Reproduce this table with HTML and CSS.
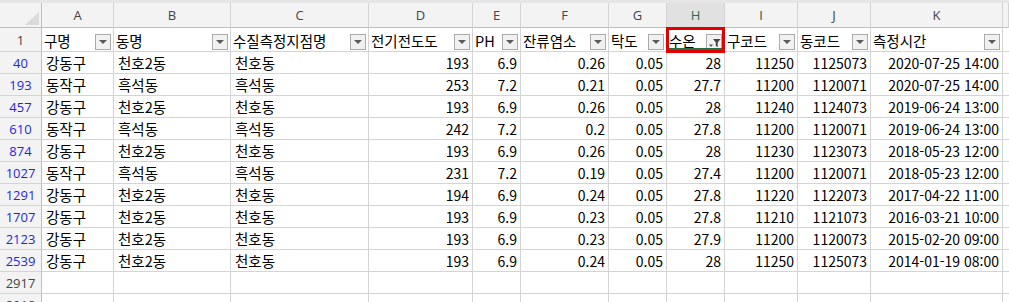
FILE: index.html
```html
<!DOCTYPE html>
<html lang="ko">
<head>
    <meta charset="UTF-8">
    <title>수질 측정 데이터</title>
    <link rel="stylesheet" href="styles.css">
</head>
<body>
    <div class="ribbon-edge"></div>

    <div class="sheet">
        <!-- 열 머리글 -->
        <div class="row">
            <div class="corner"><span class="corner-tri"></span></div>
            <div class="col-head">A</div>
            <div class="col-head">B</div>
            <div class="col-head">C</div>
            <div class="col-head">D</div>
            <div class="col-head">E</div>
            <div class="col-head">F</div>
            <div class="col-head">G</div>
            <div class="col-head selected">H</div>
            <div class="col-head">I</div>
            <div class="col-head">J</div>
            <div class="col-head">K</div>
            <div class="col-head"></div>
        </div>

        <!-- 필터 머리글 -->
        <div class="row">
            <div class="row-head plain">1</div>
            <div class="cell head">구명<span class="filter-btn"></span></div>
            <div class="cell head">동명<span class="filter-btn"></span></div>
            <div class="cell head">수질측정지점명<span class="filter-btn"></span></div>
            <div class="cell head">전기전도도<span class="filter-btn"></span></div>
            <div class="cell head">PH<span class="filter-btn"></span></div>
            <div class="cell head">잔류염소<span class="filter-btn"></span></div>
            <div class="cell head">탁도<span class="filter-btn"></span></div>
            <div class="cell head active">수온
                <span class="filter-btn filtered">
                    <svg viewBox="0 0 13 13" width="13" height="13">
                        <path d="M1 8.5h4l-2 2.5z" fill="#555"/>
                        <path d="M5 3h7.5l-2.8 3.4v4.6l-1.9-1.1v-3.5z" fill="#444"/>
                    </svg>
                </span>
                <span class="mark"></span>
            </div>
            <div class="cell head">구코드<span class="filter-btn"></span></div>
            <div class="cell head">동코드<span class="filter-btn"></span></div>
            <div class="cell head">측정시간<span class="filter-btn"></span></div>
            <div class="cell"></div>
        </div>

        <div class="row">
            <div class="row-head">40</div>
            <div class="cell">강동구</div><div class="cell">천호2동</div><div class="cell">천호동</div>
            <div class="cell num">193</div><div class="cell num">6.9</div><div class="cell num">0.26</div><div class="cell num">0.05</div><div class="cell num">28</div>
            <div class="cell num">11250</div><div class="cell num">1125073</div><div class="cell num">2020-07-25 14:00</div><div class="cell"></div>
        </div>
        <div class="row">
            <div class="row-head">193</div>
            <div class="cell">동작구</div><div class="cell">흑석동</div><div class="cell">흑석동</div>
            <div class="cell num">253</div><div class="cell num">7.2</div><div class="cell num">0.21</div><div class="cell num">0.05</div><div class="cell num">27.7</div>
            <div class="cell num">11200</div><div class="cell num">1120071</div><div class="cell num">2020-07-25 14:00</div><div class="cell"></div>
        </div>
        <div class="row">
            <div class="row-head">457</div>
            <div class="cell">강동구</div><div class="cell">천호2동</div><div class="cell">천호동</div>
            <div class="cell num">193</div><div class="cell num">6.9</div><div class="cell num">0.26</div><div class="cell num">0.05</div><div class="cell num">28</div>
            <div class="cell num">11240</div><div class="cell num">1124073</div><div class="cell num">2019-06-24 13:00</div><div class="cell"></div>
        </div>
        <div class="row">
            <div class="row-head">610</div>
            <div class="cell">동작구</div><div class="cell">흑석동</div><div class="cell">흑석동</div>
            <div class="cell num">242</div><div class="cell num">7.2</div><div class="cell num">0.2</div><div class="cell num">0.05</div><div class="cell num">27.8</div>
            <div class="cell num">11200</div><div class="cell num">1120071</div><div class="cell num">2019-06-24 13:00</div><div class="cell"></div>
        </div>
        <div class="row">
            <div class="row-head">874</div>
            <div class="cell">강동구</div><div class="cell">천호2동</div><div class="cell">천호동</div>
            <div class="cell num">193</div><div class="cell num">6.9</div><div class="cell num">0.26</div><div class="cell num">0.05</div><div class="cell num">28</div>
            <div class="cell num">11230</div><div class="cell num">1123073</div><div class="cell num">2018-05-23 12:00</div><div class="cell"></div>
        </div>
        <div class="row">
            <div class="row-head">1027</div>
            <div class="cell">동작구</div><div class="cell">흑석동</div><div class="cell">흑석동</div>
            <div class="cell num">231</div><div class="cell num">7.2</div><div class="cell num">0.19</div><div class="cell num">0.05</div><div class="cell num">27.4</div>
            <div class="cell num">11200</div><div class="cell num">1120071</div><div class="cell num">2018-05-23 12:00</div><div class="cell"></div>
        </div>
        <div class="row">
            <div class="row-head">1291</div>
            <div class="cell">강동구</div><div class="cell">천호2동</div><div class="cell">천호동</div>
            <div class="cell num">194</div><div class="cell num">6.9</div><div class="cell num">0.24</div><div class="cell num">0.05</div><div class="cell num">27.8</div>
            <div class="cell num">11220</div><div class="cell num">1122073</div><div class="cell num">2017-04-22 11:00</div><div class="cell"></div>
        </div>
        <div class="row">
            <div class="row-head">1707</div>
            <div class="cell">강동구</div><div class="cell">천호2동</div><div class="cell">천호동</div>
            <div class="cell num">193</div><div class="cell num">6.9</div><div class="cell num">0.23</div><div class="cell num">0.05</div><div class="cell num">27.8</div>
            <div class="cell num">11210</div><div class="cell num">1121073</div><div class="cell num">2016-03-21 10:00</div><div class="cell"></div>
        </div>
        <div class="row">
            <div class="row-head">2123</div>
            <div class="cell">강동구</div><div class="cell">천호2동</div><div class="cell">천호동</div>
            <div class="cell num">193</div><div class="cell num">6.9</div><div class="cell num">0.23</div><div class="cell num">0.05</div><div class="cell num">27.9</div>
            <div class="cell num">11200</div><div class="cell num">1120073</div><div class="cell num">2015-02-20 09:00</div><div class="cell"></div>
        </div>
        <div class="row">
            <div class="row-head">2539</div>
            <div class="cell">강동구</div><div class="cell">천호2동</div><div class="cell">천호동</div>
            <div class="cell num">193</div><div class="cell num">6.9</div><div class="cell num">0.24</div><div class="cell num">0.05</div><div class="cell num">28</div>
            <div class="cell num">11250</div><div class="cell num">1125073</div><div class="cell num">2014-01-19 08:00</div><div class="cell"></div>
        </div>
        <div class="row">
            <div class="row-head plain">2917</div>
            <div class="cell"></div><div class="cell"></div><div class="cell"></div><div class="cell"></div>
            <div class="cell"></div><div class="cell"></div><div class="cell"></div><div class="cell"></div>
            <div class="cell"></div><div class="cell"></div><div class="cell"></div><div class="cell"></div>
        </div>
        <div class="row">
            <div class="row-head plain">2918</div>
            <div class="cell"></div><div class="cell"></div><div class="cell"></div><div class="cell"></div>
            <div class="cell"></div><div class="cell"></div><div class="cell"></div><div class="cell"></div>
            <div class="cell"></div><div class="cell"></div><div class="cell"></div><div class="cell"></div>
        </div>
    </div>
</body>
</html>
```

FILE: styles.css
```css
:root {
    --grid-line: #d4d4d4;
    --head-bg: #f3f3f3;
    --head-line: #bfbfbf;
    --excel-green: #217346;
    --filtered-blue: #1f1fe8;
}
html, body {
    margin: 0;
    padding: 0;
    background: #ffffff;
    overflow: hidden;
}
body {
    width: 1009px;
    height: 302px;
    font-family: "Noto Sans CJK KR", "Noto Sans", sans-serif;
    color: #000;
}
.ribbon-edge {
    height: 3px;
    background: #e6e6e6;
}
.sheet {
    display: grid;
    grid-template-columns: 42px 72px 117px 138px 104px 48px 88px 58px 58px 73px 73px 132px 6px;
    grid-template-rows: 25px 24px;
    grid-auto-rows: 22px;
}
.row {
    display: contents;
}
.corner, .col-head, .row-head, .cell {
    box-sizing: border-box;
    display: flex;
    align-items: center;
    overflow: hidden;
    white-space: nowrap;
}
.corner {
    background: var(--head-bg);
    border-right: 1px solid var(--head-line);
    border-bottom: 1px solid var(--head-line);
    justify-content: flex-end;
    align-items: flex-end;
    padding: 0 2px 2px 0;
}
.corner-tri {
    width: 0;
    height: 0;
    border-left: 14px solid transparent;
    border-bottom: 13px solid #dadada;
}
.col-head {
    background: var(--head-bg);
    border-right: 1px solid var(--grid-line);
    border-bottom: 1px solid var(--head-line);
    justify-content: center;
    font-family: "Open Sans", "Noto Sans", sans-serif;
    font-size: 13px;
    color: #444;
}
.col-head.selected {
    background: #e1e1e1;
    color: var(--excel-green);
}
.row-head {
    background: var(--head-bg);
    border-right: 1px solid var(--head-line);
    border-bottom: 1px solid var(--grid-line);
    justify-content: center;
    font-family: "Open Sans", "Noto Sans", sans-serif;
    font-size: 13px;
    color: var(--filtered-blue);
}
.row-head.plain {
    color: #444;
}
.cell {
    border-right: 1px solid var(--grid-line);
    border-bottom: 1px solid var(--grid-line);
    padding: 0 3px 0 4px;
    font-size: 14.5px;
}
.cell.num {
    justify-content: flex-end;
    font-size: 14px;
}
.cell.head {
    justify-content: space-between;
    padding-right: 2px;
    padding-left: 2px;
    padding-top: 1px;
}
.filter-btn {
    box-sizing: border-box;
    flex: none;
    width: 16px;
    height: 16px;
    margin-top: 4px;
    border: 1px solid #ababab;
    background: #f1f1f1;
    display: flex;
    align-items: center;
    justify-content: center;
}
.filter-btn::after {
    content: "";
    border-left: 4px solid transparent;
    border-right: 4px solid transparent;
    border-top: 4px solid #5a5a5a;
}
.filter-btn.filtered::after {
    content: none;
}
.cell.active {
    position: relative;
    overflow: visible;
}
.cell.active::after {
    content: "";
    position: absolute;
    left: 2px;
    right: 2px;
    bottom: 1px;
    height: 2px;
    background: var(--excel-green);
}
.mark {
    position: absolute;
    top: -1px;
    left: -1px;
    right: -1px;
    bottom: -2px;
    border: 3px solid #e50000;
    z-index: 2;
}
```
